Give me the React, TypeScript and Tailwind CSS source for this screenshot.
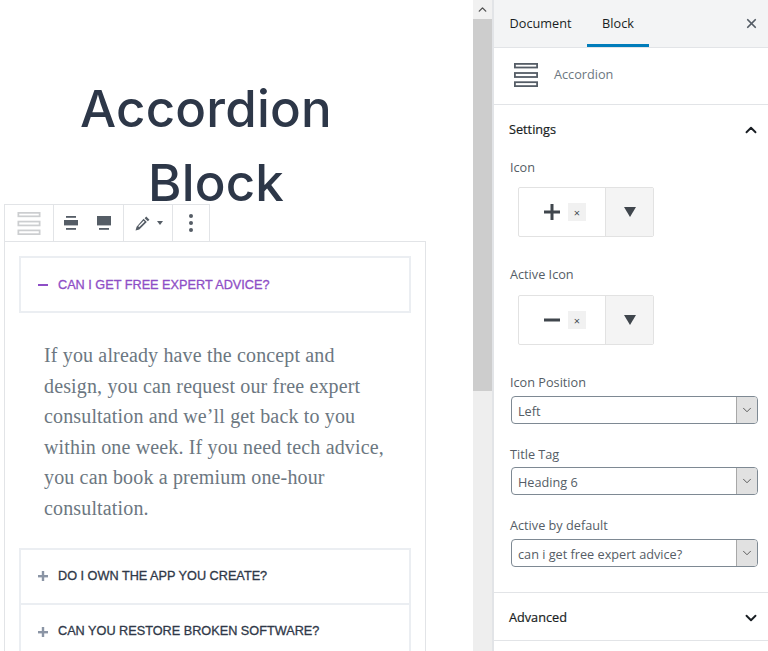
import { ChevronUp, ChevronDown, X } from 'lucide-react'

const uiFont = "font-['Open_Sans',sans-serif]"

const BlockGlyph = ({ className }: { className: string }) => (
  <svg viewBox="0 0 24 24" className={className} fill="none" stroke="currentColor" strokeWidth="1.8">
    <rect x="0.9" y="0.9" width="22.2" height="3.6" />
    <rect x="0.9" y="10" width="22.2" height="4" />
    <rect x="0.9" y="19.2" width="22.2" height="3.9" />
  </svg>
)

const AccordionRow = ({ title, extra }: { title: string; extra?: string }) => (
  <div className={`flex items-center border-2 border-[#ebeef2] bg-white pl-[17px] font-['Liberation_Sans',sans-serif] text-[12.7px] [-webkit-text-stroke:0.3px] ${extra ?? ''}`}>
    <svg viewBox="0 0 10 10" className="h-[10px] w-[10px] text-[#8b95a5]" fill="currentColor">
      <rect x="0" y="4" width="10" height="2.4" />
      <rect x="3.8" y="0" width="2.4" height="10" />
    </svg>
    <span className="ml-[10px] text-[#2f3848]">{title}</span>
  </div>
)

const IconPicker = ({ minus }: { minus?: boolean }) => (
  <div className="ml-[8px] flex h-[50px] w-[136px] overflow-hidden rounded-[2px] border border-[#e2e2e2]">
    <div className="flex w-[87px] items-center justify-center gap-[8px] border-r border-[#e2e2e2] pl-[6px]">
      <svg viewBox="0 0 16 16" className="h-[16px] w-[16px] text-[#40464d]" fill="currentColor">
        <rect x="0" y="6.5" width="16" height="3" />
        {!minus && <rect x="6.5" y="0" width="3" height="16" />}
      </svg>
      <span className="flex h-[18px] w-[18px] items-center justify-center bg-[#f1f1f1] pt-[1px] text-[11px] leading-none text-[#444b52]">×</span>
    </div>
    <div className="flex flex-1 items-center justify-center bg-[#f4f4f4]">
      <div className="h-0 w-0 border-x-[6.5px] border-t-[10px] border-x-transparent border-t-[#40464d]" />
    </div>
  </div>
)

const SelectBox = ({ value }: { value: string }) => (
  <div className="ml-[1px] flex h-[28px] w-[247px] items-stretch overflow-hidden rounded-[4px] border border-[#7e8993] bg-white">
    <div className="flex flex-1 items-center pl-[6px] pt-[3px] text-[#555d66]">{value}</div>
    <div className="flex w-[21px] items-center justify-center border-l border-[#a8a8a8] bg-[#e1e1e1]">
      <ChevronDown size={14} strokeWidth={1.3} className="text-[#333]" />
    </div>
  </div>
)

const Field = ({ label, children, className }: { label: string; children: React.ReactNode; className?: string }) => (
  <div className={className}>
    <div className="leading-[18px] text-[#555d66]">{label}</div>
    {children}
  </div>
)

export default function App() {
  return (
    <div className={`flex h-[651px] w-[768px] overflow-hidden bg-white text-[12.7px] ${uiFont}`}>
      <main className="w-[473px] shrink-0 overflow-hidden">
        <h1 className="ml-[36px] mt-[72px] w-[340px] text-center font-['Inter',sans-serif] text-[51px] font-medium leading-[74px] tracking-[0.2px] text-[#2d3748]">
          Accordion
          <span className="block pl-[20px]">Block</span>
        </h1>
        <div className="ml-[4px] mt-[-16px] flex h-[37px] w-[206px] border border-b-0 border-[#e2e4e7] bg-white">
          <div className="flex w-[49px] items-center justify-center border-r border-[#e2e4e7]">
            <BlockGlyph className="h-[23px] w-[24px] text-[#ccced0]" />
          </div>
          <div className="flex w-[70px] items-center gap-[19px] border-r border-[#e2e4e7] pl-[10px] text-[#555d66]">
            <svg viewBox="0 0 14 14" className="h-[14px] w-[14px]" fill="currentColor">
              <rect x="2" y="0" width="10" height="1.8" />
              <rect x="0" y="4" width="14" height="5.4" />
              <rect x="2" y="12" width="10" height="1.8" />
            </svg>
            <svg viewBox="0 0 14 14" className="h-[14px] w-[14px]" fill="currentColor">
              <rect x="0" y="0" width="14" height="9.4" />
              <rect x="2" y="12" width="10" height="1.8" />
            </svg>
          </div>
          <div className="flex w-[49px] items-center gap-[7px] border-r border-[#e2e4e7] pl-[11px] text-[#555d66]">
            <svg viewBox="0 0 14 14" className="h-[15px] w-[15px]" fill="currentColor">
              <path d="M10.5 0.5l3 3-1.5 1.5-3-3zM8 2.5l3 3-7 7-3.5 1 1-3.5zM8 4.5l-5 5 1 .8 5-5z" fillRule="evenodd" />
            </svg>
            <div className="h-0 w-0 border-x-[3px] border-t-[4px] border-x-transparent border-t-[#555d66]" />
          </div>
          <div className="flex w-[36px] items-center justify-center">
            <div className="flex flex-col gap-[3px]">
              <div className="h-[4px] w-[4px] rounded-full bg-[#555d66]" />
              <div className="h-[4px] w-[4px] rounded-full bg-[#555d66]" />
              <div className="h-[4px] w-[4px] rounded-full bg-[#555d66]" />
            </div>
          </div>
        </div>
        <div className="ml-[4px] w-[422px] border border-[#e2e4e7] px-[14px] pb-[40px] pt-[14px]">
          <div className="flex h-[57px] items-center border-2 border-[#ebeef2] pl-[17px] font-['Liberation_Sans',sans-serif] text-[12.7px] text-[#8e4ec6] [-webkit-text-stroke:0.3px]">
            <div className="h-[2px] w-[10px] bg-[#8e4ec6]" />
            <span className="ml-[10px] pt-[2px]">CAN I GET FREE EXPERT ADVICE?</span>
          </div>
          <p className="mb-[24px] mt-[27px] pl-[25px] pr-[25px] font-['Liberation_Serif',serif] text-[20px] leading-[30.6px] tracking-[0.15px] text-[#6c7781]">
            If you already have the concept and design, you can request our free expert consultation and we’ll get back to you within one week. If you need tech advice, you can book a premium one-hour consultation.
          </p>
          <AccordionRow title="DO I OWN THE APP YOU CREATE?" extra="h-[57px]" />
          <AccordionRow title="CAN YOU RESTORE BROKEN SOFTWARE?" extra="h-[58px] -mt-[2px]" />
        </div>
      </main>

      <div className="flex w-[19px] shrink-0 flex-col bg-[#eeeeee]">
        <div className="flex h-[19px] items-center justify-center bg-[#f1f1f1]">
          <ChevronUp size={13} strokeWidth={2.5} className="text-[#505050]" />
        </div>
        <div className="h-[372px] bg-[#cdcdcd]" />
      </div>

      <aside className="flex-1 border-l-2 border-[#e2e4e7] bg-white">
        <div className="flex h-[48px] items-stretch border-b border-[#e2e4e7] bg-[#f3f4f5] text-[#191e23]">
          <div className="flex w-[93px] items-center justify-center">Document</div>
          <div className="flex w-[62px] items-center justify-center border-b-[3px] border-[#007cba] pt-[3px]">Block</div>
          <div className="ml-auto flex w-[34px] items-center justify-center pr-[12px] text-[#555d66]">
            <X size={15} strokeWidth={2.8} className="shrink-0" />
          </div>
        </div>
        <div className="flex h-[57px] items-center border-b border-[#e2e4e7] pb-[2px] pl-[20px] text-[#6c7781]">
          <BlockGlyph className="h-[24px] w-[24px] shrink-0 text-[#555d66]" />
          <span className="ml-[16px]">Accordion</span>
        </div>
        <div className="h-[488px] border-b border-[#e2e4e7] px-[16px]">
          <div className="-ml-[1px] flex h-[50px] items-center justify-between font-medium text-[#191e23] [-webkit-text-stroke:0.2px]">
            Settings
            <ChevronUp size={18} strokeWidth={2.5} className="-mr-[2px]" />
          </div>
          <Field label="Icon" className="mt-[3px]">
            <div className="mt-[11px]"><IconPicker /></div>
          </Field>
          <Field label="Active Icon" className="mt-[28px]">
            <div className="mt-[12px]"><IconPicker minus /></div>
          </Field>
          <Field label="Icon Position" className="mt-[28px]">
            <div className="mt-[5px]"><SelectBox value="Left" /></div>
          </Field>
          <Field label="Title Tag" className="mt-[21px]">
            <div className="mt-[4px]"><SelectBox value="Heading 6" /></div>
          </Field>
          <Field label="Active by default" className="mt-[21px]">
            <div className="mt-[5px]"><SelectBox value="can i get free expert advice?" /></div>
          </Field>
        </div>
        <div className="flex h-[48px] items-center justify-between border-b border-[#e2e4e7] pl-[15px] pr-[16px] pt-[2px] font-medium text-[#191e23] [-webkit-text-stroke:0.2px]">
          Advanced
          <ChevronDown size={18} strokeWidth={2.5} className="-mr-[2px]" />
        </div>
      </aside>
    </div>
  )
}
